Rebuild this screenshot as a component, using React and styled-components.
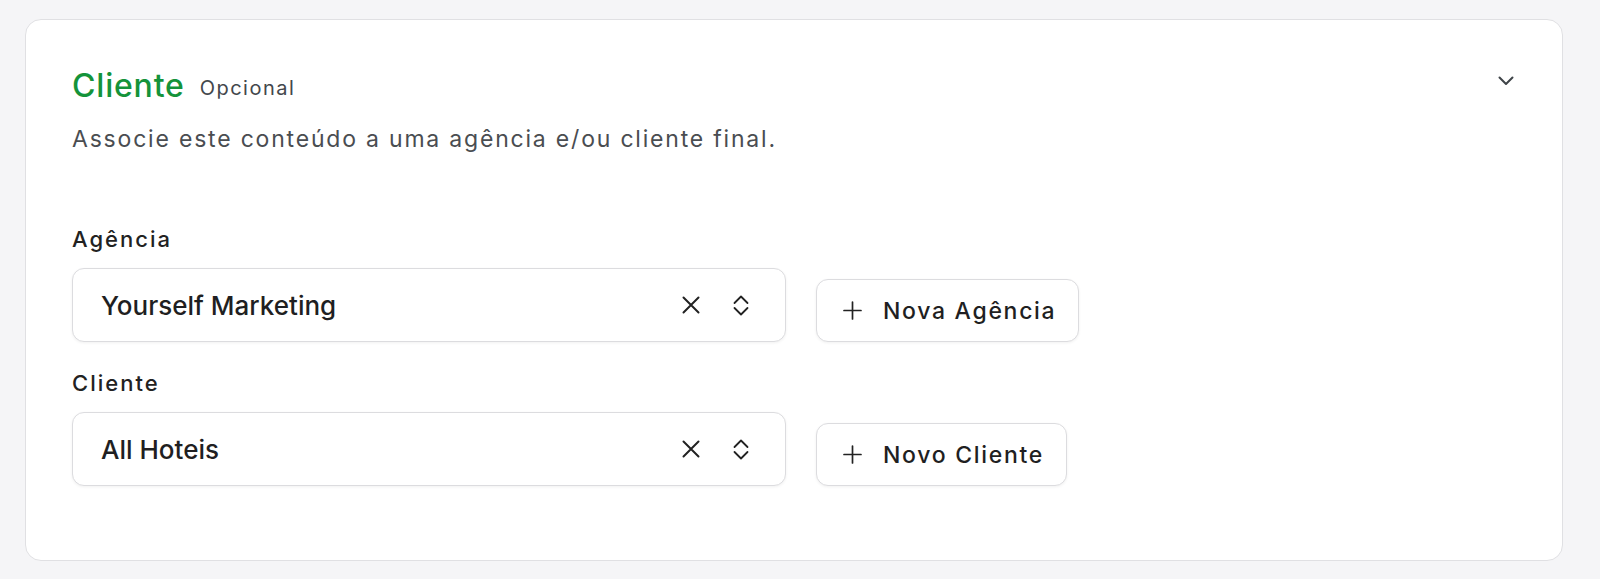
import React from 'react'
import styled, { createGlobalStyle } from 'styled-components'

const GlobalStyle = createGlobalStyle`
    html, body {
        margin: 0;
        padding: 0;
        background: #f5f5f7;
        font-family: Inter, "Liberation Sans", sans-serif;
    }
`

const Page = styled.div`
    padding: 19px 37px 20px 25px;
`

const Card = styled.section`
    background: #fff;
    border: 1px solid #e0e0e3;
    border-radius: 16px;
    padding: 46px 48px 74px 46px;
`

const Header = styled.div`
    display: flex;
    justify-content: space-between;
    align-items: flex-start;
`

const TitleRow = styled.div`
    display: flex;
    align-items: center;
    gap: 15px;
`

const Title = styled.h2`
    margin: 0;
    font-size: 32px;
    line-height: 40px;
    font-weight: 500;
    color: #14933a;
    letter-spacing: 0.8px;
`

const Optional = styled.span`
    padding-top: 3px;
    font-size: 20px;
    line-height: 24px;
    color: #43474c;
    letter-spacing: 1.5px;
`

const Description = styled.p`
    margin: 17px 0 0;
    font-size: 23px;
    line-height: 32px;
    color: #4a4d51;
    letter-spacing: 1.8px;
`

const Collapse = styled.button`
    background: none;
    border: none;
    padding: 0;
    margin: 10px 0 0;
    width: 16px;
    height: 10px;
    display: flex;
    cursor: pointer;
`

const Fields = styled.div`
    margin-top: 70px;
    display: flex;
    flex-direction: column;
    gap: 27px;
`

const Field = styled.div`
    display: flex;
    flex-direction: column;
    gap: 15px;
`

const Label = styled.label`
    font-size: 22px;
    line-height: 28px;
    font-weight: 500;
    color: #222;
    letter-spacing: 2px;
`

const Row = styled.div`
    display: flex;
    align-items: flex-end;
    gap: 30px;
`

const Select = styled.div`
    box-sizing: border-box;
    width: 714px;
    height: 74px;
    display: flex;
    align-items: center;
    padding: 0 36px 0 28px;
    border: 1px solid #dcdcdf;
    border-radius: 12px;
    box-shadow: 0 1px 3px rgba(0, 0, 0, 0.06);
    background: #fff;
`

const Value = styled.span`
    flex: 1;
    font-size: 26px;
    font-weight: 500;
    color: #1f1f22;
`

const IconSlot = styled.span`
    display: flex;
    margin-left: ${p => p.$gap || 0}px;
    color: #222;
`

const Button = styled.button`
    box-sizing: border-box;
    height: 63px;
    display: flex;
    align-items: center;
    gap: 21px;
    padding: 0 22px 0 26px;
    background: #fff;
    border: 1px solid #dcdcdf;
    border-radius: 12px;
    box-shadow: 0 1px 3px rgba(0, 0, 0, 0.06);
    font-family: inherit;
    font-size: 23px;
    font-weight: 500;
    color: #1f1f22;
    letter-spacing: 1.7px;
    cursor: pointer;
`

const XIcon = () => (
    <svg width="18" height="18" viewBox="0 0 18 18" fill="none" stroke="currentColor" strokeWidth="2" strokeLinecap="round">
        <path d="M1.5 1.5L16.5 16.5M16.5 1.5L1.5 16.5" />
    </svg>
)

const UpDown = () => (
    <svg width="16" height="21" viewBox="0 0 16 21" fill="none" stroke="currentColor" strokeWidth="1.8" strokeLinecap="round" strokeLinejoin="round">
        <path d="M1.5 8L8 1.5L14.5 8" />
        <path d="M1.5 13L8 19.5L14.5 13" />
    </svg>
)

const Plus = () => (
    <svg width="19" height="19" viewBox="0 0 19 19" fill="none" stroke="#222" strokeWidth="1.7" strokeLinecap="round">
        <path d="M9.5 1V18M1 9.5H18" />
    </svg>
)

const ChevronDown = () => (
    <svg width="16" height="10" viewBox="0 0 16 10" fill="none" stroke="#3f4448" strokeWidth="2" strokeLinecap="round" strokeLinejoin="round">
        <path d="M1.5 1.5L8 8L14.5 1.5" />
    </svg>
)

const SelectField = ({ label, value, action }) => (
    <Field>
        <Label>{label}</Label>
        <Row>
            <Select>
                <Value>{value}</Value>
                <IconSlot><XIcon /></IconSlot>
                <IconSlot $gap={33}><UpDown /></IconSlot>
            </Select>
            <Button><Plus />{action}</Button>
        </Row>
    </Field>
)

const App = () => {
    return (
        <Page>
            <GlobalStyle />
            <Card>
                <Header>
                    <div>
                        <TitleRow>
                            <Title>Cliente</Title>
                            <Optional>Opcional</Optional>
                        </TitleRow>
                        <Description>Associe este conteúdo a uma agência e/ou cliente final.</Description>
                    </div>
                    <Collapse aria-label="Recolher"><ChevronDown /></Collapse>
                </Header>
                <Fields>
                    <SelectField label="Agência" value="Yourself Marketing" action="Nova Agência" />
                    <SelectField label="Cliente" value="All Hoteis" action="Novo Cliente" />
                </Fields>
            </Card>
        </Page>
    )
}

export default App
